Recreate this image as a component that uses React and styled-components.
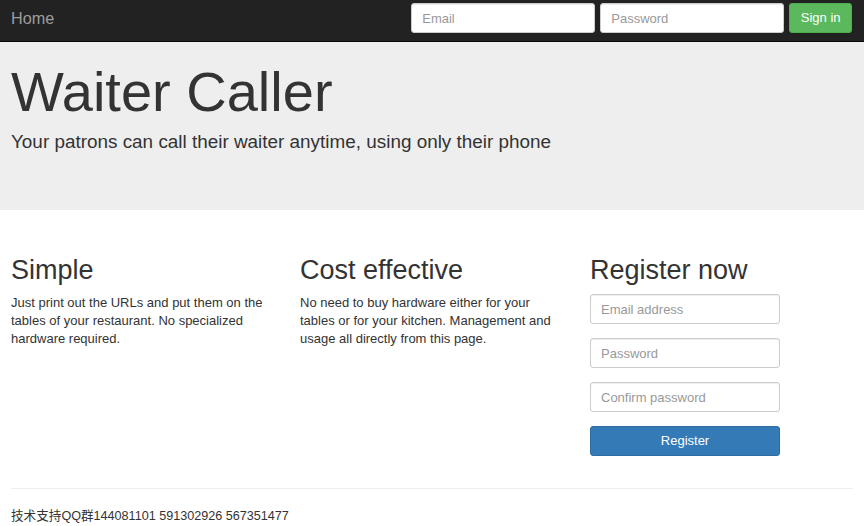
import styled, { createGlobalStyle } from "styled-components";

const GlobalStyle = createGlobalStyle`
  * { box-sizing: border-box; }
  body {
    margin: 0;
    background: #fff;
    color: #333;
    font-family: "Liberation Sans", Arial, "Noto Sans CJK SC", sans-serif;
    font-size: 13px;
    line-height: 18px;
  }
  input::placeholder { color: #999; }
`;

const Navbar = styled.nav`
  height: 42px;
  background: #222;
  border-bottom: 1px solid #080808;
  display: flex;
  align-items: flex-start;
  justify-content: space-between;
  padding: 3px 12px 0 11px;
`;

const Brand = styled.a`
  color: #9d9d9d;
  font-size: 16.2px;
  line-height: 20px;
  padding-top: 5px;
  text-decoration: none;
`;

const NavForm = styled.form`
  display: flex;
  gap: 5px;
`;

const Input = styled.input`
  display: block;
  width: ${(p) => p.$width || 190}px;
  height: 30px;
  padding: 0 10px;
  font: inherit;
  font-size: 13px;
  color: #555;
  background: #fff;
  border: 1px solid #ccc;
  border-radius: 3px;
  box-shadow: inset 0 1px 1px rgba(0, 0, 0, 0.075);
  outline: none;
`;

const Button = styled.button`
  height: 30px;
  padding: 0 10.5px;
  font: inherit;
  font-size: 13px;
  color: #fff;
  background: ${(p) => (p.$variant === "success" ? "#5cb85c" : "#337ab7")};
  border: 1px solid ${(p) => (p.$variant === "success" ? "#4cae4c" : "#2e6da4")};
  border-radius: 3px;
  width: ${(p) => (p.$block ? "190px" : "auto")};
`;

const Jumbotron = styled.header`
  background: #eee;
  height: 168px;
  padding: 10px 11px 0;
`;

const Title = styled.h1`
  margin: 0;
  font-size: 56px;
  font-weight: 400;
  line-height: 80px;
`;

const Lead = styled.p`
  margin: -4px 0 0;
  font-size: 18.9px;
  line-height: 28px;
`;

const Row = styled.main`
  display: grid;
  grid-template-columns: 289px 290px 1fr;
  padding: 44px 11px 0;
`;

const Col = styled.section`
  padding-right: 27px;
`;

const ColTitle = styled.h2`
  margin: 0 0 8px;
  font-size: 27px;
  font-weight: 400;
  line-height: 32px;
`;

const Text = styled.p`
  margin: ${(p) => (p.$lead ? "1px 0 0" : "0")};
  font-size: ${(p) => p.$size || 13}px;
`;

const RegisterForm = styled.form`
  display: flex;
  flex-direction: column;
  gap: 14px;
`;

const Footer = styled.footer`
  margin: 32px 11px 0;
  border-top: 1px solid #eee;
  padding-top: 18px;
`;

export default function App() {
  return (
    <>
      <GlobalStyle />
      <Navbar>
        <Brand href="#">Home</Brand>
        <NavForm>
          <Input $width={184} type="text" placeholder="Email" />
          <Input $width={184} type="password" placeholder="Password" />
          <Button $variant="success" type="button">
            Sign in
          </Button>
        </NavForm>
      </Navbar>
      <Jumbotron>
        <Title>Waiter Caller</Title>
        <Lead>Your patrons can call their waiter anytime, using only their phone</Lead>
      </Jumbotron>
      <Row>
        <Col>
          <ColTitle>Simple</ColTitle>
          <Text $lead>
            Just print out the URLs and put them on the tables of your
            restaurant. No specialized hardware required.
          </Text>
        </Col>
        <Col>
          <ColTitle>Cost effective</ColTitle>
          <Text $lead>
            No need to buy hardware either for your tables or for your kitchen.
            Management and usage all directly from this page.
          </Text>
        </Col>
        <Col>
          <ColTitle>Register now</ColTitle>
          <RegisterForm>
            <Input type="email" placeholder="Email address" />
            <Input type="password" placeholder="Password" />
            <Input type="password" placeholder="Confirm password" />
            <Button $block type="button">
              Register
            </Button>
          </RegisterForm>
        </Col>
      </Row>
      <Footer>
        <Text $size={12.6}>技术支持QQ群144081101 591302926 567351477</Text>
      </Footer>
    </>
  );
}
